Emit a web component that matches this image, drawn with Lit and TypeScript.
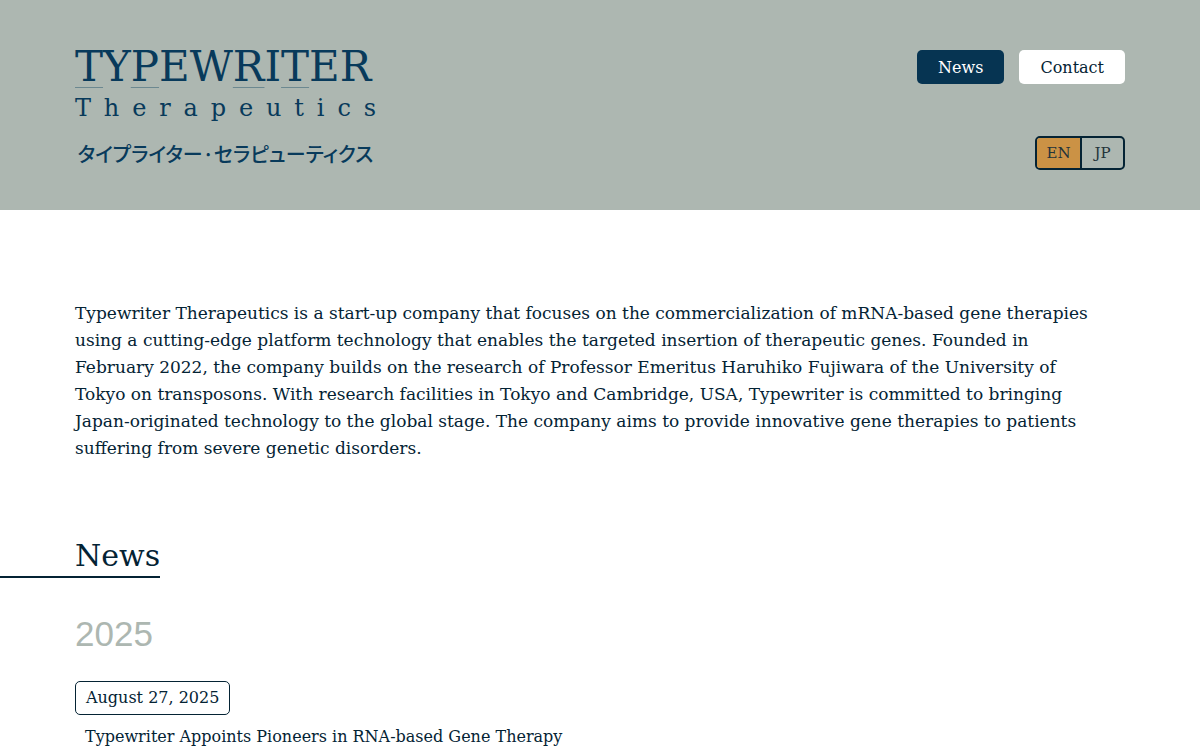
import { LitElement, html, css } from "lit";
import { customElement, state } from "lit/decorators.js";

@customElement("app-root")
export class AppRoot extends LitElement {
  static styles = css`
    :host {
      display: block;
      font-family: "DejaVu Serif", serif;
      font-size: 17px;
      line-height: 27px;
      color: #042334;
      background: #ffffff;
    }
    * { box-sizing: border-box; }
    a { color: inherit; text-decoration: none; }
    .header {
      display: flex;
      justify-content: space-between;
      background: #adb7b1;
      padding: 50px 75px 40px;
    }
    .logo { display: block; width: 301px; color: #083a5b; }
    .wordmark { display: block; font-size: 42px; line-height: 34px; white-space: nowrap; }
    .key {
      text-decoration: underline;
      text-decoration-thickness: 1px;
      text-decoration-color: #6c8890;
      text-underline-offset: 6px;
      text-decoration-skip-ink: none;
    }
    .sub {
      display: block;
      margin-top: 10px;
      font-size: 24px;
      line-height: 28px;
      text-align: justify;
      text-align-last: justify;
    }
    .kana {
      display: block;
      margin-top: 16px;
      font: 500 20px/32px "Noto Sans CJK JP", sans-serif;
      font-feature-settings: "palt";
      text-align: center;
      white-space: nowrap;
    }
    .side { display: flex; flex-direction: column; justify-content: space-between; align-items: flex-end; }
    .nav { display: flex; gap: 15px; }
    .button {
      display: grid;
      place-items: center;
      height: 34px;
      padding: 0 21px;
      border-radius: 5px;
      background: #ffffff;
      font-size: 16px;
    }
    .button.current { background: #063452; color: #ffffff; }
    .lang {
      display: grid;
      grid-template-columns: 1fr 1fr;
      width: 90px;
      height: 34px;
      border: 2px solid #042334;
      border-radius: 5px;
      overflow: hidden;
    }
    .lang button {
      padding: 0;
      border: 0;
      background: transparent;
      color: #23333a;
      font: 15px "DejaVu Serif", serif;
    }
    .lang button + button { border-left: 2px solid #042334; }
    .lang button.on { background: #cb9245; }
    .main { padding: 90px 75px 0; }
    .intro { margin: 0; padding-right: 30px; }
    .heading {
      width: fit-content;
      margin: 74px 0 0 -75px;
      padding-left: 75px;
      border-bottom: 2px solid #042334;
      font-size: 30px;
      font-weight: 400;
      line-height: 40px;
    }
    .year {
      margin: 36px 0 0;
      font: 400 35px/40px "Liberation Sans", sans-serif;
      color: #adb7b1;
    }
    .date {
      display: block;
      width: fit-content;
      margin-top: 27px;
      padding: 0 10px;
      border: 1px solid #042334;
      border-radius: 5px;
      font-size: 16px;
      line-height: 32px;
    }
    .item { display: block; margin-top: 8px; padding-left: 10px; font-size: 16px; }
  `;

  @state() private lang = "EN";

  render() {
    return html`
      <header class="header">
        <a class="logo" href="#">
          <span class="wordmark"><span class="key">T</span>Y<span class="key">P</span>EW<span class="key">R</span>I<span class="key">T</span>ER</span>
          <span class="sub">T h e r a p e u t i c s</span>
          <span class="kana" lang="ja">タイプライター·セラピューティクス</span>
        </a>
        <div class="side">
          <nav class="nav">
            <a class="button current" href="#news">News</a>
            <a class="button" href="#contact">Contact</a>
          </nav>
          <div class="lang">
            ${["EN", "JP"].map(
              (l) => html`<button class=${this.lang === l ? "on" : ""} @click=${() => (this.lang = l)}>${l}</button>`
            )}
          </div>
        </div>
      </header>
      <main class="main">
        <p class="intro">
          Typewriter Therapeutics is a start-up company that focuses on the commercialization of mRNA-based gene therapies
          using a cutting-edge platform technology that enables the targeted insertion of therapeutic genes. Founded in
          February 2022, the company builds on the research of Professor Emeritus Haruhiko Fujiwara of the University of
          Tokyo on transposons. With research facilities in Tokyo and Cambridge, USA, Typewriter is committed to bringing
          Japan-originated technology to the global stage. The company aims to provide innovative gene therapies to patients
          suffering from severe genetic disorders.
        </p>
        <section id="news">
          <h2 class="heading">News</h2>
          <h3 class="year">2025</h3>
          <time class="date" datetime="2025-08-27">August 27, 2025</time>
          <a class="item" href="#pioneers">Typewriter Appoints Pioneers in RNA-based Gene Therapy</a>
        </section>
      </main>
    `;
  }
}
